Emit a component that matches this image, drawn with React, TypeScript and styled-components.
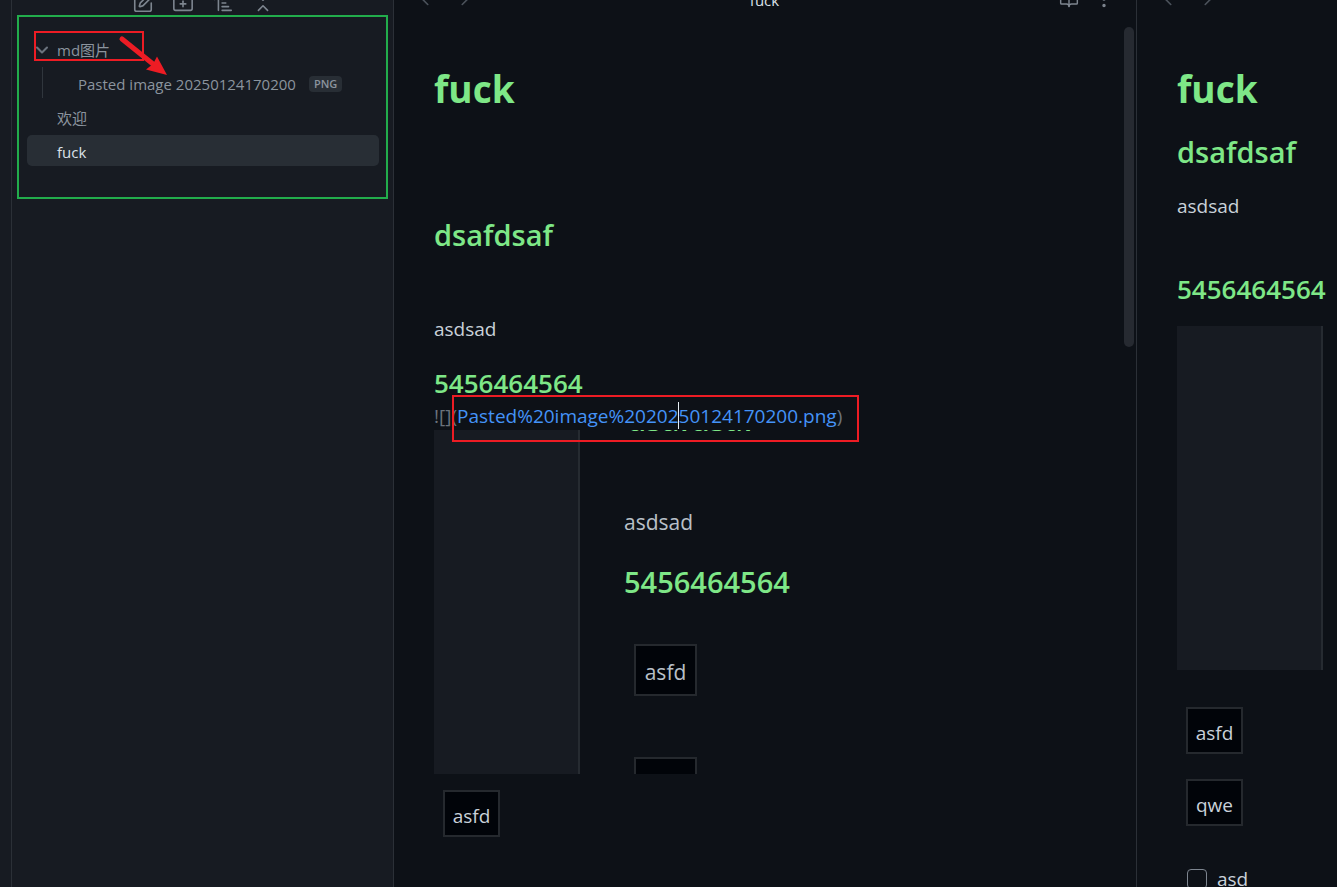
import React from "react";
import styled, { createGlobalStyle } from "styled-components";
import {
  BookOpen,
  ChevronDown,
  ChevronLeft,
  ChevronRight,
  ChevronsDownUp,
  ArrowUpNarrowWide,
  EllipsisVertical,
  FolderPlus,
  SquarePen,
} from "lucide-react";

const GlobalStyle = createGlobalStyle`
  *, *::before, *::after { box-sizing: border-box; }
  body {
    margin: 0;
    background: #0d1117;
    color: #c9d1d9;
    font-family: "Open Sans", "Noto Sans", "Noto Sans CJK SC", sans-serif;
  }
  h1, h2, h3, p, ul { margin: 0; padding: 0; font-weight: 400; }
`;

const Workspace = styled.div`
  display: grid;
  grid-template-columns: 12px 382px minmax(0, 1fr) 200px;
  height: 100vh;
  overflow: hidden;
`;

const Ribbon = styled.div`
  background: #171b22;
  border-right: 1px solid #2b3037;
`;

const Sidebar = styled.aside`
  background: #171b22;
  border-right: 1px solid #2b3037;
`;

const IconButton = styled.button<{ $dim?: boolean }>`
  display: flex;
  padding: 0;
  border: 0;
  background: none;
  color: ${(p) => (p.$dim ? "#4b525b" : "#7d858f")};
`;

const SidebarTools = styled.div`
  display: flex;
  justify-content: center;
  align-items: flex-end;
  gap: 18px;
  height: 14px;
  overflow: hidden;
`;

const FileTree = styled.nav`
  margin: 1px 5px 0;
  padding: 16px 7px 31px 8px;
  border: 2px solid #22ad4c;
`;

const TreeList = styled.ul`
  list-style: none;
  display: flex;
  flex-direction: column;
  gap: 3px;
`;

const TreeItem = styled.li`
  position: relative;
`;

const TreeRow = styled.a<{ $active?: boolean; $nested?: boolean }>`
  display: flex;
  align-items: center;
  height: 31px;
  padding-top: 2px;
  padding-left: ${(p) => (p.$nested ? 35 : 30)}px;
  margin-left: ${(p) => (p.$nested ? 15 : 0)}px;
  border-left: ${(p) => (p.$nested ? "1px solid #30363d" : "0")};
  border-radius: ${(p) => (p.$nested ? 0 : 5)}px;
  background: ${(p) => (p.$active ? "#282e35" : "transparent")};
  color: ${(p) => (p.$active ? "#dbe2e9" : "#8b949e")};
  font-size: 15px;
  line-height: 28px;
  text-decoration: none;
  white-space: nowrap;
`;

const FoldMark = styled.span`
  display: flex;
  width: 20px;
  margin-left: -25px;
  margin-right: 5px;
  color: #6b737d;
`;

const FileTag = styled.span`
  margin-left: 13px;
  padding: 0 5px;
  border-radius: 4px;
  background: #282e35;
  font-size: 11px;
  font-weight: 600;
  line-height: 16px;
`;

const FolderOutline = styled.span`
  position: absolute;
  left: 7px;
  top: -2px;
  width: 110px;
  height: 30px;
  border: 2px solid #ed1c24;
  pointer-events: none;
`;

const PointerArrow = styled.svg`
  position: absolute;
  left: 90px;
  top: 0;
  pointer-events: none;
  z-index: 1;
`;

const Pane = styled.section<{ $divided?: boolean }>`
  display: flex;
  flex-direction: column;
  min-width: 0;
  overflow: hidden;
  border-right: ${(p) => (p.$divided ? "1px solid #2b3037" : "0")};
`;

const PaneHeader = styled.header`
  display: grid;
  grid-template-columns: 1fr auto 1fr;
  grid-template-rows: 10px;
  align-items: end;
  margin-bottom: 17px;
  padding: 0 21px 0 20px;
  overflow: hidden;
`;

const HeaderGroup = styled.div<{ $end?: boolean }>`
  display: flex;
  align-items: center;
  gap: ${(p) => (p.$end ? 14 : 18)}px;
  justify-content: ${(p) => (p.$end ? "flex-end" : "flex-start")};
`;

const PaneTitle = styled.span`
  font-size: 15px;
  line-height: 20px;
  color: #dbe2e9;
`;

const PaneBody = styled.div`
  display: flex;
  justify-content: space-between;
  flex: 1;
  min-height: 0;
`;

const ScrollThumb = styled.div`
  flex: none;
  width: 10px;
  height: 320px;
  margin-right: 2px;
  border-radius: 5px;
  background: #262a31;
`;

const Note = styled.article`
  flex: 1;
  min-width: 0;
  padding: 36px 0 0 40px;
  font-size: 19px;
  line-height: 30px;
  white-space: nowrap;
`;

const NoteTitle = styled.h1`
  font-size: 37px;
  font-weight: 700;
  line-height: 52px;
  color: #7ee787;
`;

const Heading = styled.h2<{ $gap: number }>`
  margin-top: ${(p) => p.$gap}px;
  font-size: 29px;
  font-weight: 600;
  line-height: 40px;
  color: #7ee787;
`;

const SubHeading = styled.h3<{ $gap: number }>`
  margin-top: ${(p) => p.$gap}px;
  font-size: 26px;
  font-weight: 600;
  line-height: 34px;
  color: #7ee787;
`;

const Paragraph = styled.p<{ $gap: number }>`
  margin-top: ${(p) => p.$gap}px;
`;

const SourceLine = styled.p`
  position: relative;
  height: 30px;
  line-height: 32px;
  color: #6b737d;
`;

const SourceLink = styled.a`
  color: #4493f8;
  text-decoration: none;
`;

const Caret = styled.span`
  display: inline-block;
  width: 1px;
  height: 27px;
  margin-left: -1px;
  vertical-align: -6px;
  background: #e6edf3;
`;

const LinkOutline = styled.span`
  position: absolute;
  left: 18px;
  top: -5px;
  width: 407px;
  height: 47px;
  border: 2px solid #ed1c24;
  pointer-events: none;
`;

const Embed = styled.figure<{ $gap?: number }>`
  display: flex;
  height: 344px;
  margin: ${(p) => p.$gap || 0}px 0 0;
  overflow: hidden;
`;

const EmbedPanel = styled.div`
  flex: none;
  width: 146px;
  background: #171b22;
  border-right: 2px solid #262b31;
`;

const EmbedNote = styled.div`
  padding-left: 44px;
  font-size: 21px;
  line-height: 32px;
  color: #b9c0c8;
`;

const EmbedCut = styled.div`
  display: flex;
  align-items: flex-end;
  height: 12px;
  padding-left: 3px;
  overflow: hidden;
  color: #7ee787;
  font-size: 31px;
  font-weight: 600;
  line-height: 46px;
`;

const EmbedText = styled.p`
  margin-top: 64px;
`;

const EmbedHeading = styled.h3`
  margin-top: 25px;
  font-size: 29px;
  font-weight: 600;
  line-height: 38px;
  color: #7ee787;
`;

const Block = styled.div<{ $gap: number; $large?: boolean }>`
  width: ${(p) => (p.$large ? 63 : 57)}px;
  height: ${(p) => (p.$large ? 52 : 47)}px;
  margin: ${(p) => p.$gap}px 0 0 ${(p) => (p.$large ? 10 : 9)}px;
  padding-top: ${(p) => (p.$large ? 10 : 9)}px;
  border: 2px solid #25292e;
  background: #010409;
  text-align: center;
`;

const Task = styled.label`
  display: flex;
  align-items: center;
  gap: 10px;
  margin: 38px 0 0 10px;
`;

const TaskBox = styled.input`
  appearance: none;
  width: 20px;
  height: 20px;
  margin: 0;
  border: 1px solid #7d858f;
  border-radius: 4px;
`;

const icon = { size: 22, strokeWidth: 1.75 };

function HeaderNav() {
  return (
    <HeaderGroup>
      <IconButton $dim aria-label="Back"><ChevronLeft {...icon} /></IconButton>
      <IconButton $dim aria-label="Forward"><ChevronRight {...icon} /></IconButton>
    </HeaderGroup>
  );
}

export default function App() {
  return (
    <>
      <GlobalStyle />
      <Workspace>
        <Ribbon />
        <Sidebar>
          <SidebarTools>
            <IconButton aria-label="New note"><SquarePen {...icon} /></IconButton>
            <IconButton aria-label="New folder"><FolderPlus {...icon} /></IconButton>
            <IconButton aria-label="Sort order"><ArrowUpNarrowWide {...icon} /></IconButton>
            <IconButton aria-label="Collapse all"><ChevronsDownUp {...icon} /></IconButton>
          </SidebarTools>
          <FileTree>
            <TreeList>
              <TreeItem>
                <TreeRow href="#folder">
                  <FoldMark><ChevronDown size={20} strokeWidth={2.5} /></FoldMark>
                  md图片
                </TreeRow>
                <FolderOutline />
                <PointerArrow width="52" height="44" viewBox="0 0 52 44" aria-hidden="true">
                  <path d="M5 6 L36 31" stroke="#ed1c24" strokeWidth="5" strokeLinecap="round" />
                  <path d="M50 42 L29 36.500 L36 31 L40 23.500 Z" fill="#ed1c24" />
                </PointerArrow>
              </TreeItem>
              <TreeItem>
                <TreeRow href="#image" $nested>
                  Pasted image 20250124170200
                  <FileTag>PNG</FileTag>
                </TreeRow>
              </TreeItem>
              <TreeItem><TreeRow href="#welcome">欢迎</TreeRow></TreeItem>
              <TreeItem><TreeRow href="#note" $active>fuck</TreeRow></TreeItem>
            </TreeList>
          </FileTree>
        </Sidebar>

        <Pane $divided>
          <PaneHeader>
            <HeaderNav />
            <PaneTitle>fuck</PaneTitle>
            <HeaderGroup $end>
              <IconButton aria-label="Reading view"><BookOpen size={20} strokeWidth={1.75} /></IconButton>
              <IconButton aria-label="More options"><EllipsisVertical {...icon} /></IconButton>
            </HeaderGroup>
          </PaneHeader>
          <PaneBody>
            <Note>
              <NoteTitle>fuck</NoteTitle>
              <Heading $gap={100}>dsafdsaf</Heading>
              <Paragraph $gap={59}>asdsad</Paragraph>
              <SubHeading $gap={22}>5456464564</SubHeading>
              <SourceLine>
                ![](<SourceLink href="#image">Pasted%20image%20202<Caret />50124170200.png</SourceLink>)
                <LinkOutline />
              </SourceLine>
              <Embed>
                <EmbedPanel />
                <EmbedNote>
                  <EmbedCut>dsafdsaf</EmbedCut>
                  <EmbedText>asdsad</EmbedText>
                  <EmbedHeading>5456464564</EmbedHeading>
                  <Block $gap={43} $large>asfd</Block>
                  <Block $gap={61} $large />
                </EmbedNote>
              </Embed>
              <Block $gap={16}>asfd</Block>
            </Note>
            <ScrollThumb />
          </PaneBody>
        </Pane>

        <Pane>
          <PaneHeader><HeaderNav /></PaneHeader>
          <PaneBody>
            <Note>
              <NoteTitle>fuck</NoteTitle>
              <Heading $gap={17}>dsafdsaf</Heading>
              <Paragraph $gap={19}>asdsad</Paragraph>
              <SubHeading $gap={51}>5456464564</SubHeading>
              <Embed $gap={20}><EmbedPanel /></Embed>
              <Block $gap={37}>asfd</Block>
              <Block $gap={25}>qwe</Block>
              <Task><TaskBox type="checkbox" />asd</Task>
            </Note>
          </PaneBody>
        </Pane>
      </Workspace>
    </>
  );
}
